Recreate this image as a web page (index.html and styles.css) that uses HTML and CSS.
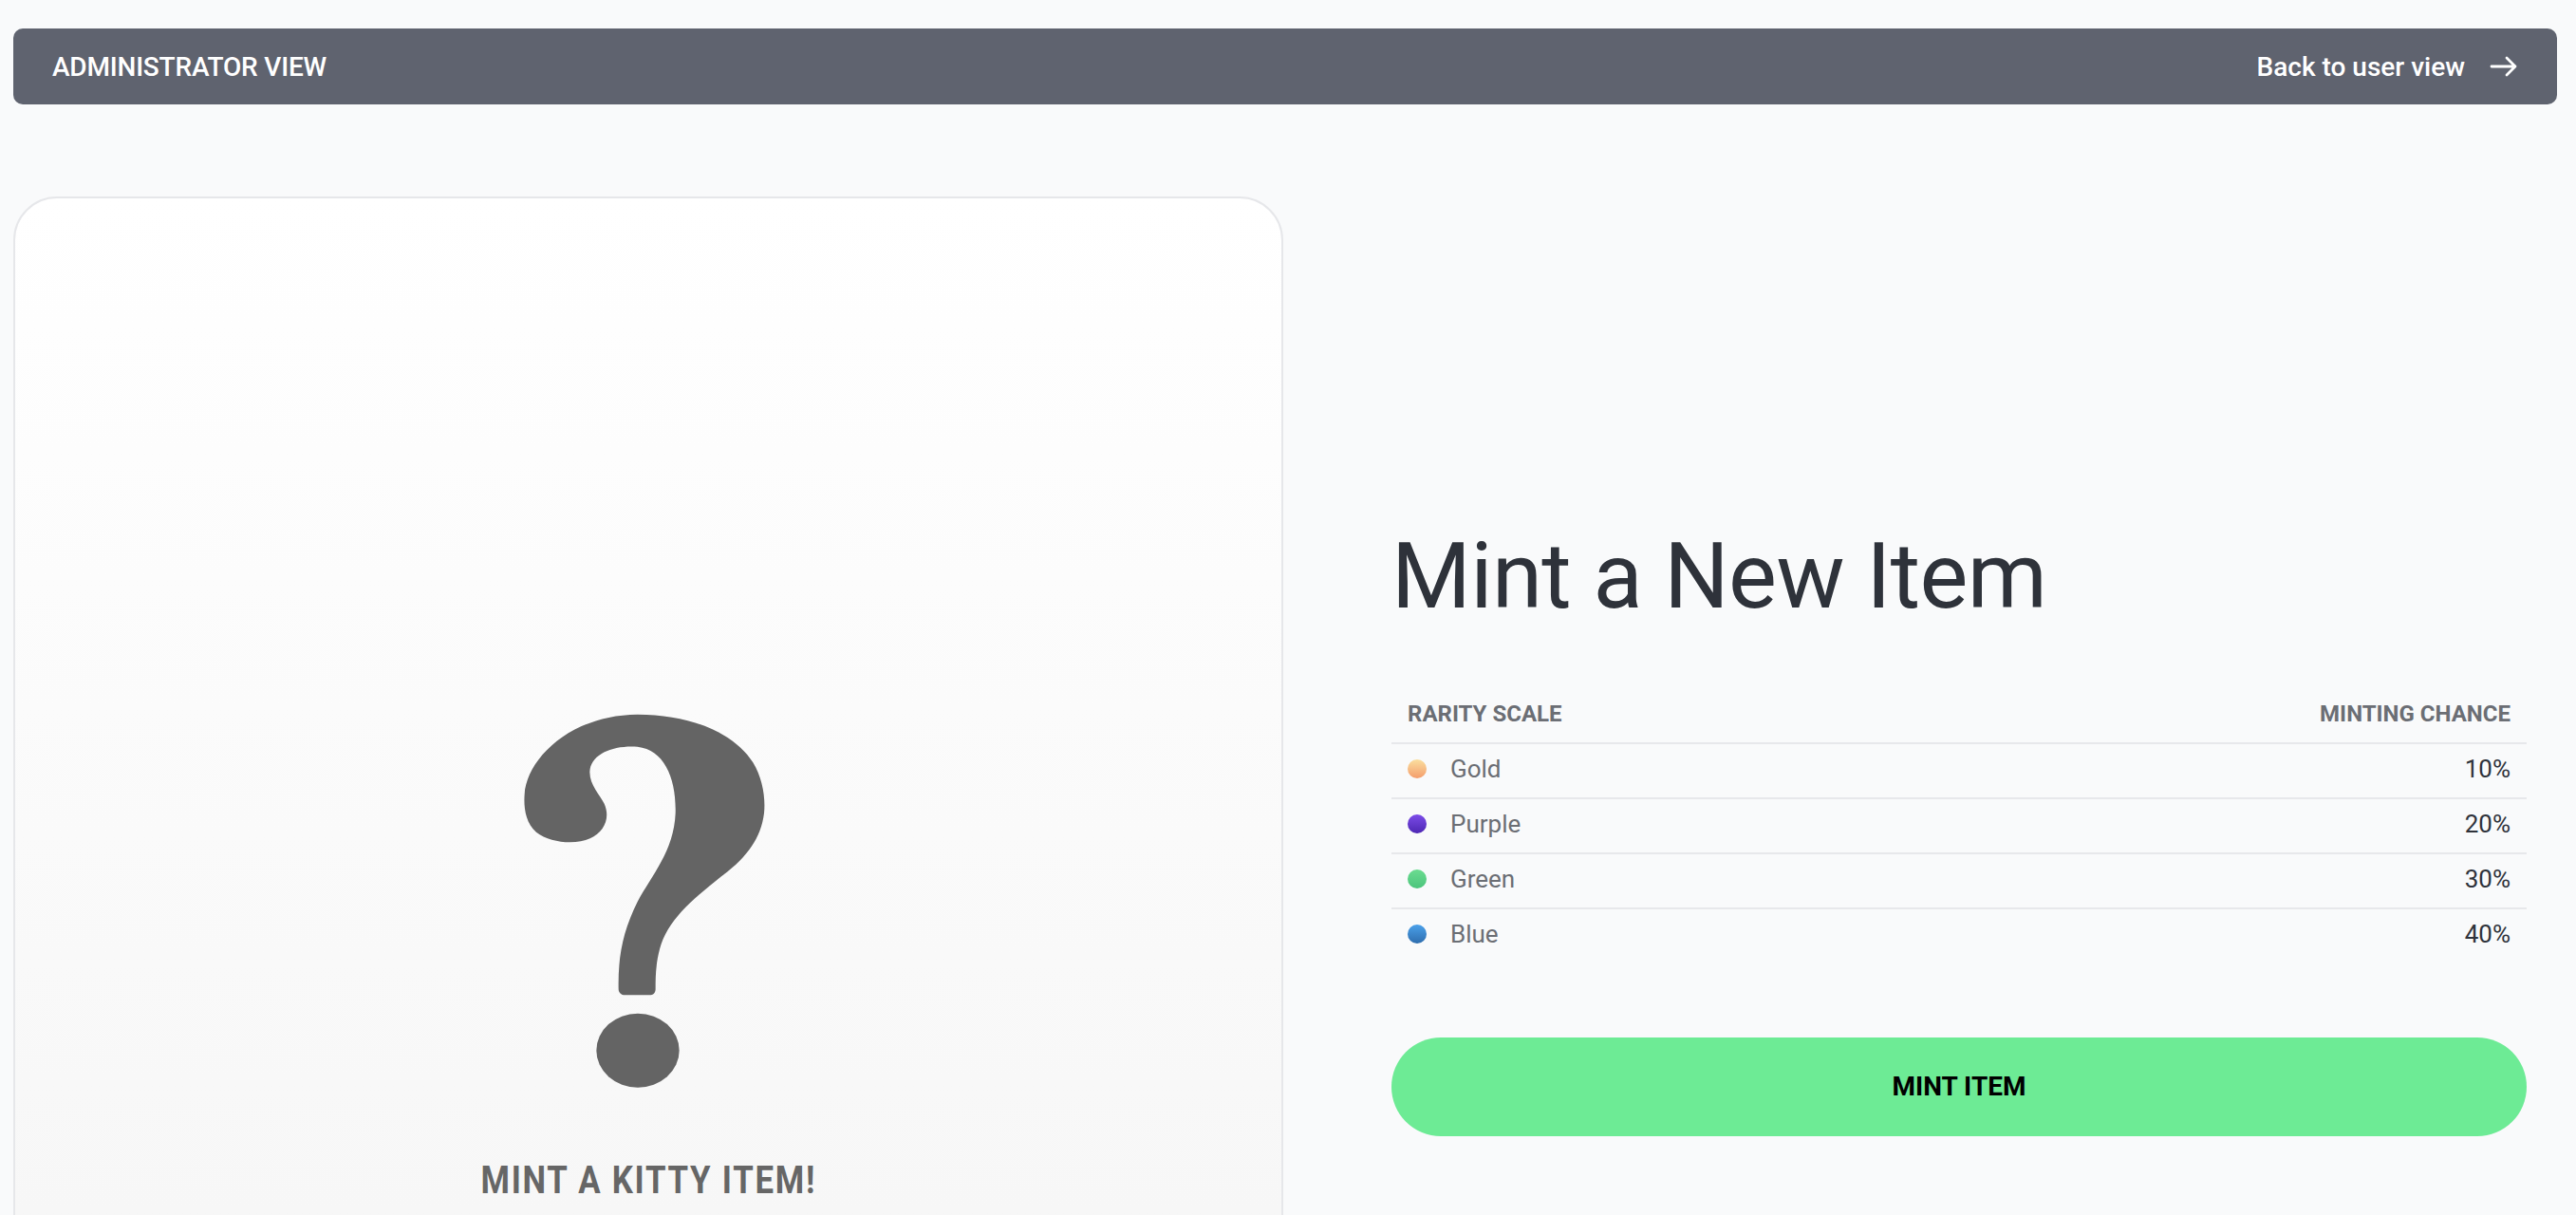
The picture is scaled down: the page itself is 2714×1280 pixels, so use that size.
FILE: index.html
```html
<!DOCTYPE html>
<html lang="en">
<head>
<meta charset="utf-8">
<title>Kitty Items - Admin</title>
<link rel="stylesheet" href="styles.css">
</head>
<body>
<header class="topbar">
  <span class="topbar-title">ADMINISTRATOR VIEW</span>
  <a class="topbar-link" href="#">
    <span>Back to user view</span>
    <svg class="arrow" width="30" height="24" viewBox="0 0 30 24" aria-hidden="true">
      <path d="M2 12 H27 M18 3 L27 12 L18 21" fill="none" stroke="#fff" stroke-width="2.8" stroke-linecap="round" stroke-linejoin="round"/>
    </svg>
  </a>
</header>
<main class="main">
  <section class="card">
    <svg class="qmark" width="280" height="420" viewBox="0 0 840 1260" aria-hidden="true">
      <path fill="#646464" d="M395 38 C560 38 700 95 760 190 C790 240 800 300 795 350 C785 430 740 490 660 550 C560 630 490 690 465 780 C452 830 452 870 452 905 C452 918 445 925 432 925 L356 925 C343 925 335 917 335 905 C333 800 350 720 395 630 C440 545 510 470 515 350 C518 240 480 150 395 140 C320 135 255 160 245 210 C238 255 275 290 290 320 C310 365 290 410 245 430 C200 450 120 445 75 410 C40 380 35 330 38 290 C45 180 180 40 395 38 Z"/>
      <ellipse fill="#646464" cx="396" cy="1100" rx="131" ry="117"/>
    </svg>
    <div class="caption"><span class="caption-text">MINT A KITTY ITEM!</span></div>
  </section>
  <section class="panel">
    <h1 class="title">Mint a New Item</h1>
    <div class="table">
      <div class="row head">
        <span>RARITY SCALE</span>
        <span>MINTING CHANCE</span>
      </div>
      <div class="row">
        <span class="name"><i class="dot gold"></i>Gold</span>
        <span class="pct">10%</span>
      </div>
      <div class="row">
        <span class="name"><i class="dot purple"></i>Purple</span>
        <span class="pct">20%</span>
      </div>
      <div class="row">
        <span class="name"><i class="dot green"></i>Green</span>
        <span class="pct">30%</span>
      </div>
      <div class="row">
        <span class="name"><i class="dot blue"></i>Blue</span>
        <span class="pct">40%</span>
      </div>
    </div>
    <button class="mint-btn" type="button">MINT ITEM</button>
  </section>
</main>
</body>
</html>
```
FILE: styles.css
```css
* { box-sizing: border-box; }
html, body { margin: 0; padding: 0; }
body {
  background: #f9fafb;
  font-family: Roboto, "Liberation Sans", Arial, sans-serif;
  overflow: hidden;
}
.topbar {
  margin: 30px 20px 0 14px;
  height: 80px;
  border-radius: 10px;
  background: #5f636f;
  color: #fff;
  display: flex;
  align-items: center;
  justify-content: space-between;
  padding: 0 41px;
  font-size: 28px;
  font-weight: 500;
}
.topbar-title { letter-spacing: -0.2px; }
.topbar-link {
  color: #fff;
  text-decoration: none;
  display: flex;
  align-items: center;
  gap: 26px;
}
.arrow { display: block; }
.main {
  display: flex;
  align-items: center;
  gap: 114px;
  padding: 97px 52px 0 14px;
}
.card {
  flex: 0 0 1338px;
  height: 1338px;
  border: 2px solid #e6e7ea;
  border-radius: 46px;
  background: linear-gradient(#ffffff, #f5f5f5);
  display: flex;
  flex-direction: column;
  align-items: center;
  padding-top: 531px;
}
.qmark {
  display: block;
  margin-left: -6px;
}
.caption {
  margin-top: 60px;
  font-size: 40px;
  line-height: 48px;
  font-weight: 700;
  color: #666666;
}
.caption-text {
  display: inline-block;
  letter-spacing: 2px;
  transform: scaleX(0.87);
}
.panel {
  flex: 0 0 1196px;
  margin-bottom: 6px;
}
.title {
  margin: 0 0 61px;
  font-size: 96px;
  line-height: 115px;
  font-weight: 400;
  color: #2e323a;
  letter-spacing: -0.6px;
}
.row {
  height: 58px;
  display: flex;
  align-items: center;
  justify-content: space-between;
  padding: 0 17px 3px 17px;
  border-bottom: 2px solid #e7e8eb;
  font-size: 26px;
}
.row:last-child { border-bottom: none; height: 56px; }
.row.head {
  font-size: 24px;
  font-weight: 700;
  color: #6b6e74;
}
.name {
  display: flex;
  align-items: center;
  color: #6b6e74;
}
.pct { color: #2f333b; }
.dot {
  width: 20px;
  height: 20px;
  border-radius: 50%;
  margin-right: 25px;
  display: inline-block;
}
.dot.gold { background: linear-gradient(#fadf9f, #f49d6c); }
.dot.purple { background: linear-gradient(#7c4ce8, #4d27b3); }
.dot.green { background: linear-gradient(#6bdc90, #4cc47c); }
.dot.blue { background: linear-gradient(#4ba1ea, #2e6dae); }
.mint-btn {
  display: block;
  width: 100%;
  height: 104px;
  margin-top: 79px;
  border: none;
  border-radius: 52px;
  background: #6deb95;
  color: #000;
  font-family: Roboto, "Liberation Sans", Arial, sans-serif;
  font-size: 28px;
  font-weight: 700;
  cursor: pointer;
}
```
